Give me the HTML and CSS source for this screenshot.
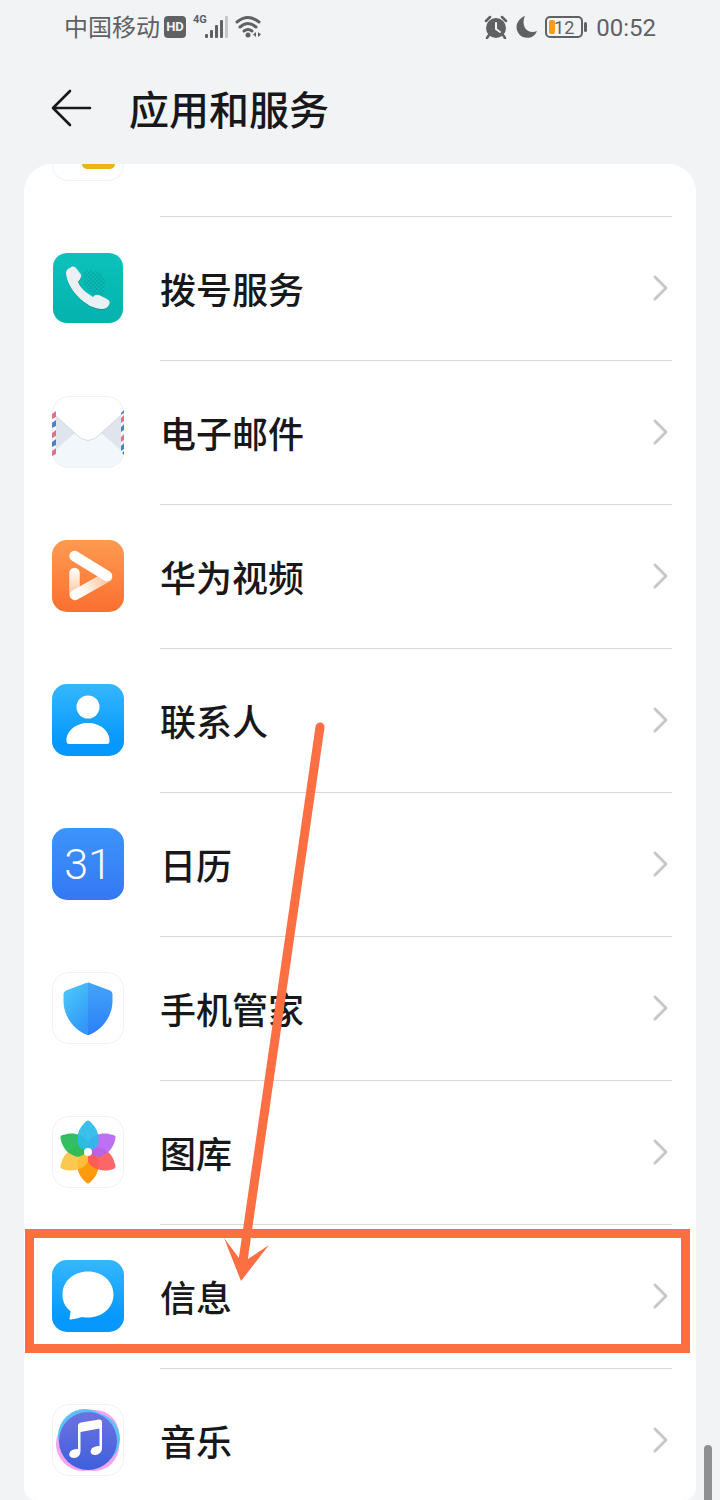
FILE: index.html
```html
<!DOCTYPE html>
<html lang="zh-CN">
<head>
  <meta charset="UTF-8">
  <meta name="viewport" content="width=device-width, initial-scale=1">
  <title>应用和服务</title>
  <link rel="stylesheet" href="styles.css">
</head>
<body>

<div class="screen">
  <div class="status">
    <div class="status-group">
      <span class="carrier">中国移动</span>
      <span class="hd">HD</span>
      <span class="net">4G</span>
      <svg class="signal" width="24" height="24" viewBox="0 0 24 24">
        <g fill="#606163">
          <rect x="0" y="19" width="3" height="4" rx="1"/>
          <rect x="5" y="15" width="3" height="8" rx="1"/>
          <rect x="10" y="10" width="3" height="13" rx="1"/>
          <rect x="15" y="5" width="3" height="18" rx="1"/>
        </g>
        <rect x="20" y="1" width="3" height="22" rx="1" fill="#c6c7c9"/>
      </svg>
      <svg class="wifi" width="28" height="24" viewBox="0 0 28 24">
        <g fill="none" stroke="#606163" stroke-width="3" stroke-linecap="round">
          <path d="M2 7Q13 -2 24 7"/>
          <path d="M5 12Q13 5 21 12"/>
          <path d="M9 16Q13 13 17 16"/>
        </g>
        <circle cx="13" cy="20" r="2.5" fill="#606163"/>
        <path d="M21 17v5l-3 -2.500zM23 17v5l3 -2.500z" fill="#606163"/>
      </svg>
    </div>
    <div class="status-group">
      <svg class="alarm" width="24" height="24" viewBox="0 0 24 24">
        <circle cx="12" cy="13" r="10" fill="#606163"/>
        <path d="M2 6L6 2M22 6L18 2M5 20L3 23M19 20l2 3" stroke="#606163" stroke-width="2.500" stroke-linecap="round"/>
        <path d="M12 8v6l4 3" fill="none" stroke="#f2f3f5" stroke-width="2" stroke-linecap="round"/>
      </svg>
      <svg class="moon" width="22" height="24" viewBox="0 0 22 24">
        <path d="M9 1C1 4 -2 13 3 19C8 25 18 24 21 16C16 18 12 17 9 13C7 9 7 5 9 1z" fill="#606163"/>
      </svg>
      <span class="battery"><span class="charge"></span>12</span>
      <span class="time">00:52</span>
    </div>
  </div>

  <header class="header">
    <button class="back" aria-label="返回">
      <svg width="42" height="40" viewBox="0 0 42 40" fill="none" stroke="#18181a" stroke-width="2.600" stroke-linecap="round" stroke-linejoin="round">
        <path d="M19 2L2 19L19 36M2 19H39"/>
      </svg>
    </button>
    <h1>应用和服务</h1>
  </header>

  <main class="card">
    <div class="row partial">
      <div class="peek"><span class="peek-mark"></span></div>
    </div>

    <a class="row" href="#dialer">
      <svg class="icon" viewBox="0 0 72 72">
        <defs>
          <linearGradient id="teal" x1="0" y1="0" x2="0" y2="1"><stop offset="0" stop-color="#0bc2bb"/><stop offset="1" stop-color="#04b2ae"/></linearGradient>
          <pattern id="dots" width="4" height="4" patternUnits="userSpaceOnUse"><circle cx="1" cy="1" r="0.700" fill="#068f8c"/><circle cx="3" cy="3" r="0.700" fill="#068f8c"/></pattern>
        </defs>
        <rect x="1" y="1" width="70" height="70" rx="14" fill="url(#teal)"/>
        <path d="M31 21L37 18L49 21L53 29L51 43L44 44L32 33z" fill="url(#dots)"/>
        <path d="M16 18L21 15Q23 15 24 17L29 24Q30 26 27 30Q30 39 41 46Q43 43 47 44L55 48Q59 50 57 54Q55 58 50 58C34 58 15 38 14 22Q14 19 16 18z" fill="#057f7e" opacity="0.450"/>
        <path d="M16 17L20 14.500Q23 14 24 16L29 22.500Q30 25 26 30Q29 38 41 45Q43 42 47 43L55 47Q59 49 57 53Q55 57 50 57C34 57 15 37 14 21Q14 18 16 17z" fill="#eaf0f4"/>
      </svg>
      <span class="label">拨号服务</span>
      <svg class="chevron" viewBox="0 0 16 28"><path d="M3 3L14 14L3 25"/></svg>
    </a>

    <a class="row" href="#mail">
      <svg class="icon" viewBox="0 0 72 72">
        <defs>
          <clipPath id="mailTile"><rect width="72" height="72" rx="16"/></clipPath>
        </defs>
        <g clip-path="url(#mailTile)">
          <rect width="72" height="72" fill="#fff"/>
          <path d="M0 54L24 37H48L72 54V72H0z" fill="#f2f7fc"/>
          <path d="M3 19L23 37L3 54zM69 19L49 37L69 54z" fill="#dfe4ed"/>
          <path d="M3 54L23 37M69 54L49 37" stroke="#e9edf3" stroke-width="1"/>
          <path d="M3 18L26 39Q36 49 46 39L69 18V0H3z" fill="#fff"/>
          <path d="M3 19L26 40Q36 49 46 40L69 19" fill="none" stroke="#d9dce2" stroke-width="1"/>
          <rect y="15" width="4" height="44" fill="#fff"/>
          <rect x="69" y="15" width="3" height="44" fill="#fff"/>
        </g>
        <rect x="0.500" y="0.500" width="71" height="71" rx="16" fill="none" stroke="#f1f2f4"/>
        <path d="M0 18l4 -3v6l-4 2zM0 37l4 -3v6l-4 2zM0 55l4 -3v6l-4 2zM69 22l3 -3v6l-3 2zM69 41l3 -3v6l-3 2z" fill="#e2728a"/>
        <path d="M0 27l4 -3v6l-4 2zM0 46l4 -3v6l-4 2zM69 17l3 -3v3l-3 2zM69 31l3 -3v6l-3 2zM69 50l3 -3v6l-3 2zM70 57l2 -2v4z" fill="#4c7fd0"/>
      </svg>
      <span class="label">电子邮件</span>
      <svg class="chevron" viewBox="0 0 16 28"><path d="M3 3L14 14L3 25"/></svg>
    </a>

    <a class="row" href="#video">
      <svg class="icon" viewBox="0 0 72 72">
        <defs>
          <linearGradient id="orange" x1="0" y1="0" x2="0" y2="1"><stop offset="0" stop-color="#fe9a51"/><stop offset="1" stop-color="#fb6f2f"/></linearGradient>
          <linearGradient id="videoLeft" x1="0" y1="28" x2="0" y2="54" gradientUnits="userSpaceOnUse"><stop offset="0" stop-color="#fff"/><stop offset="1" stop-color="#fdc7a0"/></linearGradient>
          <linearGradient id="videoLow" x1="22" y1="56" x2="56" y2="37" gradientUnits="userSpaceOnUse"><stop offset="0" stop-color="#fff"/><stop offset="0.350" stop-color="#fff4ea"/><stop offset="1" stop-color="#fcc096"/></linearGradient>
        </defs>
        <rect width="72" height="72" rx="15" fill="url(#orange)"/>
        <g fill="none" stroke-width="10.500" stroke-linecap="round">
          <path d="M22.500 33V54" stroke="url(#videoLeft)"/>
          <path d="M23 55L55 37" stroke="url(#videoLow)"/>
          <path d="M22.500 16L55 36" stroke="#fff"/>
        </g>
      </svg>
      <span class="label">华为视频</span>
      <svg class="chevron" viewBox="0 0 16 28"><path d="M3 3L14 14L3 25"/></svg>
    </a>

    <a class="row" href="#contacts">
      <svg class="icon" viewBox="0 0 72 72">
        <defs>
          <linearGradient id="sky" x1="0" y1="0" x2="0" y2="1"><stop offset="0" stop-color="#35b7fd"/><stop offset="0.800" stop-color="#0698fd"/><stop offset="1" stop-color="#0698fd"/></linearGradient>
        </defs>
        <rect width="72" height="72" rx="15" fill="url(#sky)"/>
        <circle cx="36" cy="23" r="11.500" fill="#fff"/>
        <path d="M14.500 57C14 47 24 39 36 39S58 47 57.500 57Q57.500 60 55 60H17Q14.500 60 14.500 57z" fill="#fff"/>
      </svg>
      <span class="label">联系人</span>
      <svg class="chevron" viewBox="0 0 16 28"><path d="M3 3L14 14L3 25"/></svg>
    </a>

    <a class="row" href="#calendar">
      <span class="icon calendar">31</span>
      <span class="label">日历</span>
      <svg class="chevron" viewBox="0 0 16 28"><path d="M3 3L14 14L3 25"/></svg>
    </a>

    <a class="row" href="#manager">
      <svg class="icon" viewBox="0 0 72 72">
        <defs>
          <linearGradient id="shieldL" x1="0" y1="0" x2="0.500" y2="1"><stop offset="0" stop-color="#4dcdfb"/><stop offset="1" stop-color="#3399f8"/></linearGradient>
          <linearGradient id="shieldR" x1="0" y1="0" x2="0" y2="1"><stop offset="0" stop-color="#44a4fa"/><stop offset="1" stop-color="#2b7ff6"/></linearGradient>
        </defs>
        <rect class="tile" x="0.500" y="0.500" width="71" height="71" rx="16"/>
        <path d="M36 11Q35 10.500 34 11L14 18.500Q11.500 19.500 11.500 22V30C12 44 21 57 34 62.500Q35 63 36 63z" fill="url(#shieldL)"/>
        <path d="M36 10.600Q37 10.500 38 11L58 18.500Q60.500 19.500 60.500 22V30C60 44 51 57 38 62.500Q37 63 36 63z" fill="url(#shieldR)"/>
      </svg>
      <span class="label">手机管家</span>
      <svg class="chevron" viewBox="0 0 16 28"><path d="M3 3L14 14L3 25"/></svg>
    </a>

    <a class="row" href="#gallery">
      <svg class="icon" viewBox="0 0 72 72">
        <defs>
          <path id="petal" d="M36 4.500Q37 4.500 38 5.500C43 10 46 15 46.500 21C47 26 46 30 43 32L36 36L29 32C26 30 25 26 25.500 21C26 15 29 10 34 5.500Q35 4.500 36 4.500z"/>
        </defs>
        <rect class="tile" x="0.500" y="0.500" width="71" height="71" rx="16"/>
        <use href="#petal" fill="#ff9a0c" transform="rotate(180 36 36)"/>
        <use href="#petal" fill="#fb595c" opacity="0.920" transform="rotate(120 36 36)"/>
        <use href="#petal" fill="#b562f3" opacity="0.900" transform="rotate(60 36 36)"/>
        <use href="#petal" fill="#fdc23f" opacity="0.900" transform="rotate(240 36 36)"/>
        <use href="#petal" fill="#27bb59" opacity="0.950" transform="rotate(300 36 36)"/>
        <use href="#petal" fill="#2bbbe9" opacity="0.930"/>
        <circle cx="36" cy="36" r="4" fill="#fff"/>
      </svg>
      <span class="label">图库</span>
      <svg class="chevron" viewBox="0 0 16 28"><path d="M3 3L14 14L3 25"/></svg>
    </a>

    <a class="row marked" href="#messages">
      <svg class="icon" viewBox="0 0 72 72">
        <rect width="72" height="72" rx="15" fill="url(#sky)"/>
        <path d="M36 11.500C50 11.500 61.500 21 61.500 34.500S50 57.500 36 57.500Q33 57.500 30 57Q25 58.500 19 59.500Q17 60 17.500 58Q18.500 54 18.500 51C13 47 10.500 41 10.500 34.500C10.500 21 22 11.500 36 11.500z" fill="#fff"/>
      </svg>
      <span class="label">信息</span>
      <svg class="chevron" viewBox="0 0 16 28"><path d="M3 3L14 14L3 25"/></svg>
    </a>

    <a class="row" href="#music">
      <svg class="icon" viewBox="0 0 72 72">
        <defs>
          <linearGradient id="disc" x1="0" y1="0" x2="0" y2="1"><stop offset="0" stop-color="#6e72e2"/><stop offset="1" stop-color="#3e5fdc"/></linearGradient>
        </defs>
        <rect class="tile" x="0.500" y="0.500" width="71" height="71" rx="16"/>
        <g fill="#f6a4ee">
          <circle cx="31" cy="40" r="27"/>
          <circle cx="43" cy="30" r="24"/>
          <circle cx="42" cy="42" r="25"/>
        </g>
        <g fill="#5cc0f4">
          <circle cx="33" cy="32" r="27"/>
          <circle cx="42" cy="35" r="26"/>
        </g>
        <circle cx="36" cy="37" r="29" fill="url(#disc)"/>
        <path d="M26 22Q26 19 29 18.500L47 15.500Q50 15 50 18V44C50 48 47 51 43 51C39 51 38 48 39 46C40 43 44 42 47.500 42V24.500L28.500 28V47C28.500 51 26 54 22 54C18 54 16.500 51 17.500 49C18.500 46 22 45 26 45z" fill="#fff"/>
      </svg>
      <span class="label">音乐</span>
      <svg class="chevron" viewBox="0 0 16 28"><path d="M3 3L14 14L3 25"/></svg>
    </a>

    <!-- pointer from the list to the messages row -->
    <svg class="arrow" width="110" height="570" viewBox="0 0 110 570">
      <path d="M100 6L23 540" stroke="#fb6f43" stroke-width="9" stroke-linecap="round"/>
      <path d="M4 517L19 537L28 538L49 524L21 560z" fill="#fb6f43"/>
    </svg>
  </main>

  <div class="scrollbar"></div>
</div>

</body>
</html>
```
FILE: styles.css
```css
* {
  box-sizing: border-box;
}

body {
  margin: 0;
  background-color: #f2f3f5;
  color: #18181a;
  font-family: Roboto, "Noto Sans CJK SC", sans-serif;
}

.screen {
  position: relative;
  display: flex;
  flex-direction: column;
  height: 100vh;
  overflow: hidden;
}

/* Status bar */
.status {
  display: flex;
  flex: none;
  justify-content: space-between;
  height: 54px;
  padding: 0 64px;
  color: #606163;
}

.status-group {
  display: flex;
  align-items: center;
}

.carrier {
  padding-top: 2px;
  font-size: 24px;
  line-height: 32px;
}

.hd {
  width: 22px;
  margin-left: 4px;
  border-radius: 4px;
  background-color: #606163;
  color: #f2f3f5;
  font-size: 13px;
  font-weight: bold;
  line-height: 22px;
  text-align: center;
}

.net {
  align-self: flex-start;
  margin: 13px 0 0 7px;
  font-size: 11px;
  font-weight: bold;
  line-height: 14px;
}

.signal {
  margin-left: -2px;
}

.wifi {
  margin-left: 6px;
}

.moon {
  margin-left: 8px;
}

.battery {
  position: relative;
  width: 38px;
  height: 22px;
  margin: 0 13px 0 7px;
  border: 2px solid #606163;
  border-radius: 5px;
  font-size: 18px;
  line-height: 19px;
  text-align: center;
}

.battery::after {
  content: "";
  position: absolute;
  top: 4px;
  right: -6px;
  width: 3px;
  height: 10px;
  border-radius: 2px;
  background-color: #606163;
}

.charge {
  position: absolute;
  top: 2px;
  left: 2px;
  width: 6px;
  height: 14px;
  border-radius: 2px;
  background-color: #fb9a20;
}

.time {
  padding-top: 2px;
  font-size: 24px;
  line-height: 32px;
}

/* Page header */
.header {
  display: flex;
  flex: none;
  align-items: center;
  gap: 36px;
  height: 110px;
  padding: 0 51px;
}

.back {
  display: flex;
  padding: 0;
  border: none;
  background: none;
  cursor: pointer;
}

h1 {
  margin: 0;
  padding-top: 6px;
  font-size: 40px;
  font-weight: 500;
  line-height: 56px;
}

/* App list */
.card {
  position: relative;
  flex: 1;
  min-height: 0;
  margin: 0 24px;
  overflow: hidden;
  border-radius: 28px 28px 12px 12px;
  background-color: #fff;
}

.row {
  position: relative;
  display: flex;
  align-items: center;
  gap: 36px;
  height: 144px;
  padding: 0 28px 2px;
  color: inherit;
  text-decoration: none;
}

.row::after {
  content: "";
  position: absolute;
  right: 24px;
  bottom: 0;
  left: 136px;
  height: 1px;
  background-color: #d9d9da;
}

.partial {
  align-items: flex-start;
  height: 53px;
}

.peek {
  display: flex;
  justify-content: center;
  width: 72px;
  height: 17px;
  padding-left: 20px;
  border: 1px solid #f1f2f4;
  border-top: none;
  border-radius: 0 0 16px 16px;
}

.peek-mark {
  width: 33px;
  height: 5px;
  border-radius: 0 0 5px 5px;
  background-color: #e9b416;
}

.icon {
  flex: none;
  width: 72px;
  height: 72px;
}

.tile {
  fill: #fff;
  stroke: #f1f2f4;
}

.calendar {
  border-radius: 15px;
  background: linear-gradient(#3d94fb, #3478f3);
  color: #fff;
  font-size: 43px;
  font-weight: 300;
  line-height: 73px;
  text-align: center;
}

.label {
  flex: 1;
  padding-top: 8px;
  font-size: 36px;
  font-weight: 500;
  line-height: 48px;
}

.chevron {
  flex: none;
  width: 16px;
  height: 28px;
  fill: none;
  stroke: #c8c8c9;
  stroke-width: 3;
  stroke-linecap: round;
  stroke-linejoin: round;
}

/* Highlight drawn over a row */
.marked::before {
  content: "";
  position: absolute;
  top: 4px;
  right: 6px;
  bottom: 16px;
  left: 1px;
  border: 9px solid #fb6f43;
}

.arrow {
  position: absolute;
  top: 557px;
  left: 196px;
  pointer-events: none;
}

.scrollbar {
  position: absolute;
  right: 8px;
  bottom: 0;
  width: 8px;
  height: 55px;
  border-radius: 4px 4px 0 0;
  background-color: #8f9091;
}
```
